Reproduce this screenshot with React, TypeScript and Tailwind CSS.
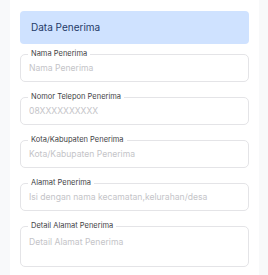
const fields = [
  { label: 'Nama Penerima', placeholder: 'Nama Penerima' },
  { label: 'Nomor Telepon Penerima', placeholder: '08XXXXXXXXXX' },
  { label: 'Kota/Kabupaten Penerima', placeholder: 'Kota/Kabupaten Penerima' },
  { label: 'Alamat Penerima', placeholder: 'Isi dengan nama kecamatan,kelurahan/desa' },
];

function FloatingField({ label, children }: { label: string; children: React.ReactNode }) {
  return (
    <div className="relative">
      <span className="absolute left-[8px] top-[-5px] bg-white px-[3px] text-[7.5px] leading-[10px] text-[#3f3f46]">
        {label}
      </span>
      {children}
    </div>
  );
}

export default function App() {
  return (
    <div
      className="h-[275px] w-[268px] overflow-hidden bg-[#f8f9fa] px-[10px]"
      style={{ fontFamily: 'Inter, "Noto Sans", sans-serif' }}
    >
      <div className="h-full w-[249px] bg-white px-[10px] pt-[11px]">
        {/* Header */}
        <div className="flex h-[33px] items-center rounded-[4px] bg-[#cfe2ff] px-[11px] text-[10px] text-[#1f3a68]">
          Data Penerima
        </div>

        <div className="mt-[10px] flex flex-col gap-[15px]">
          {fields.map((f) => (
            <FloatingField key={f.label} label={f.label}>
              <input
                className="block h-[28px] w-full rounded-[5px] border border-[#e4e4e7] px-[8px] text-[8.6px] outline-none placeholder:text-[#c4c4c8]"
                placeholder={f.placeholder}
              />
            </FloatingField>
          ))}
          <FloatingField label="Detail Alamat Penerima">
            <textarea
              className="block h-[41px] w-full resize-none rounded-[5px] border border-[#e4e4e7] px-[8px] py-[9px] text-[8.6px] leading-[12px] outline-none placeholder:text-[#c4c4c8]"
              placeholder="Detail Alamat Penerima"
            />
          </FloatingField>
        </div>
      </div>
    </div>
  );
}
